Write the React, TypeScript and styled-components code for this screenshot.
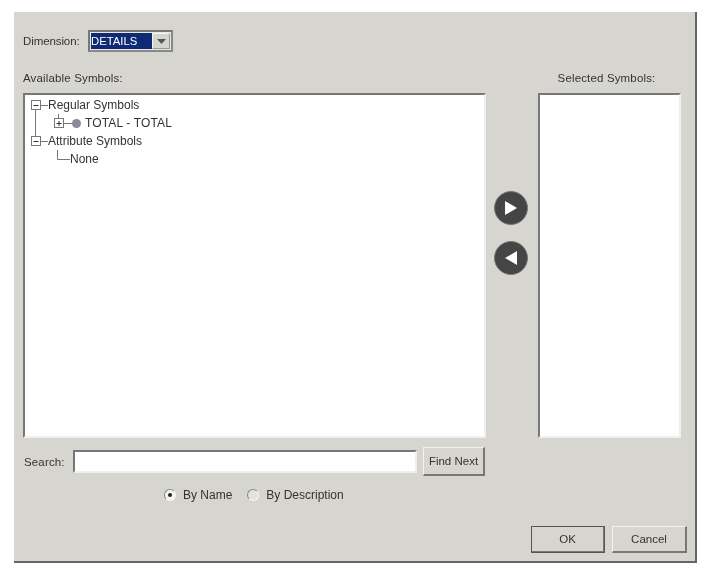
import styled, { createGlobalStyle } from 'styled-components'

// ─── Layout constants ────────────────────────────────────────────────────────
const ROW_HEIGHT = 18
const LINE = '#777'

const GlobalStyle = createGlobalStyle`
  html, body { margin: 0; padding: 0; background: #fff; }
  body { width: 718px; height: 578px; overflow: hidden; }
`

// ─── Tree drawings ───────────────────────────────────────────────────────────
const Expander = ({ x, open }: { x: number; open: boolean }) => (
  <g>
    <rect x={x + 0.5} y={4.5} width={9} height={9} fill="#fff" stroke={LINE} />
    <path d={`M${x + 2.5} 9.5H${x + 7.5}`} stroke="#333" />
    {!open && <path d={`M${x + 5} 7V12`} stroke="#333" />}
  </g>
)

const RegularGlyph = () => (
  <Glyph width={22} height={ROW_HEIGHT}>
    <Expander x={5} open />
    <path d="M15 9.5H22M9.5 14V18" stroke={LINE} fill="none" />
  </Glyph>
)

const TotalGlyph = () => (
  <Glyph width={59} height={ROW_HEIGHT}>
    <path d="M9.5 0V18M32.5 0V4M38 9.5H46" stroke={LINE} fill="none" />
    <Expander x={28} open={false} />
    <circle cx={50.5} cy={9.5} r={4.5} fill="#8b8b97" />
  </Glyph>
)

const AttributeGlyph = () => (
  <Glyph width={22} height={ROW_HEIGHT}>
    <path d="M9.5 0V4M15 9.5H22" stroke={LINE} fill="none" />
    <Expander x={5} open />
  </Glyph>
)

const NoneGlyph = () => (
  <Glyph width={44} height={ROW_HEIGHT}>
    <path d="M31.5 0V9.5H44" stroke={LINE} fill="none" />
  </Glyph>
)

// ─── Component ───────────────────────────────────────────────────────────────
const App = () => (
  <>
    <GlobalStyle />
    <Dialog>
      <DimensionRow>
        <DimensionLabel>Dimension:</DimensionLabel>
        <Combo>
          <ComboValue>DETAILS</ComboValue>
          <ComboButton>
            <svg width="9" height="5" viewBox="0 0 9 5">
              <path d="M0 0H9L4.5 5Z" fill="#555" />
            </svg>
          </ComboButton>
        </Combo>
      </DimensionRow>

      <Lists>
        <Label>Available Symbols:</Label>
        <span />
        <SelectedLabel>Selected Symbols:</SelectedLabel>
        <ListBox>
          <TreeRow><RegularGlyph />Regular Symbols</TreeRow>
          <TreeRow $caps><TotalGlyph />TOTAL - TOTAL</TreeRow>
          <TreeRow><AttributeGlyph />Attribute Symbols</TreeRow>
          <TreeRow><NoneGlyph />None</TreeRow>
        </ListBox>
        <MoveColumn>
          <MoveButton>
            <svg width="14" height="16" viewBox="0 0 14 16">
              <path d="M1 1L13 8L1 15Z" fill="#fff" />
            </svg>
          </MoveButton>
          <MoveButton>
            <svg width="14" height="16" viewBox="0 0 14 16">
              <path d="M13 1L1 8L13 15Z" fill="#fff" />
            </svg>
          </MoveButton>
        </MoveColumn>
        <ListBox />
      </Lists>

      <SearchRow>
        <SearchLabel>Search:</SearchLabel>
        <SearchInput readOnly />
        <FindButton>Find Next</FindButton>
      </SearchRow>

      <RadioRow>
        <RadioOption><Radio $checked />By Name</RadioOption>
        <RadioOption><Radio />By Description</RadioOption>
      </RadioRow>

      <Footer>
        <DialogButton $default>OK</DialogButton>
        <DialogButton>Cancel</DialogButton>
      </Footer>
    </Dialog>
  </>
)

// ─── Styles ──────────────────────────────────────────────────────────────────
const Dialog = styled.div`
  box-sizing: border-box;
  display: flex;
  flex-direction: column;
  width: 683px;
  height: 551px;
  margin: 12px 0 0 14px;
  padding: 18px 8px 8px 9px;
  background: #d6d5cf;
  border-right: 2px solid #666;
  border-bottom: 2px solid #666;
  font-family: 'Liberation Sans', Arial, sans-serif;
  font-size: 11.5px;
  color: #333;
  filter: blur(0.6px);
`

const Label = styled.span`
  line-height: 14px;
  letter-spacing: 0.15px;
  white-space: nowrap;
`

const DimensionLabel = styled(Label)`
  width: 65px;
  letter-spacing: -0.1px;
`

const SearchLabel = styled(Label)`
  width: 49px;
`

const DimensionRow = styled.div`
  display: flex;
  align-items: center;
  height: 22px;
`

const Combo = styled.div`
  box-sizing: border-box;
  display: flex;
  align-items: center;
  width: 85px;
  height: 22px;
  padding: 1px;
  background: #e8e8e4;
  border: 2px solid #777;
  border-right-color: #888;
  border-bottom-color: #888;
`

const ComboValue = styled.div`
  flex: 1;
  height: 100%;
  background: #0e2a74;
  color: #fff;
  font-size: 11.3px;
  line-height: 16px;
`

const ComboButton = styled.div`
  box-sizing: border-box;
  display: flex;
  align-items: center;
  justify-content: center;
  width: 18px;
  height: 100%;
  background: #d6d5cf;
  border: 1px solid #f4f4f0;
  border-right-color: #999;
  border-bottom-color: #999;
`

const Lists = styled.div`
  display: grid;
  grid-template-columns: 463px 52px 143px;
  grid-template-rows: 14px 345px;
  row-gap: 8px;
  margin-top: 19px;
`

const SelectedLabel = styled(Label)`
  padding-right: 6px;
  text-align: center;
`

const ListBox = styled.div`
  box-sizing: border-box;
  padding: 1px 0 0 1px;
  background: #fff;
  border: 2px solid #777;
  border-right: 2px solid #efefeb;
  border-bottom: 2px solid #efefeb;
`

const TreeRow = styled.div<{ $caps?: boolean }>`
  display: flex;
  align-items: center;
  height: ${ROW_HEIGHT}px;
  font-size: 12px;
  letter-spacing: ${({ $caps }) => ($caps ? 0.15 : 0)}px;
  white-space: nowrap;
`

const Glyph = styled.svg`
  display: block;
  flex-shrink: 0;
`

const MoveColumn = styled.div`
  display: flex;
  flex-direction: column;
  align-items: center;
  gap: 16px;
  padding: 98px 2px 0 0;
`

const MoveButton = styled.div`
  box-sizing: border-box;
  display: flex;
  align-items: center;
  justify-content: center;
  width: 34px;
  height: 34px;
  background: #454545;
  border: 1px solid #777;
  border-radius: 50%;
`

const SearchRow = styled.div`
  display: flex;
  align-items: center;
  width: 463px;
  height: 29px;
  margin-top: 9px;
  padding-left: 1px;
  box-sizing: border-box;
`

const SearchInput = styled.input`
  box-sizing: border-box;
  width: 344px;
  height: 23px;
  margin: 0 6px 0 0;
  padding: 0;
  background: #fff;
  border: 2px solid #777;
  border-right-color: #efefeb;
  border-bottom-color: #efefeb;
  outline: none;
`

const RaisedButton = styled.div`
  box-sizing: border-box;
  display: flex;
  align-items: center;
  justify-content: center;
  background: #d6d5cf;
  border: 1px solid #f2f2ee;
  border-right: 2px solid #777;
  border-bottom: 2px solid #777;
  white-space: nowrap;
`

const FindButton = styled(RaisedButton)`
  width: 62px;
  height: 29px;
`

const RadioRow = styled.div`
  display: flex;
  gap: 15px;
  height: 16px;
  margin-top: 11px;
  padding-left: 141px;
  font-size: 12px;
`

const RadioOption = styled.div`
  display: flex;
  align-items: center;
  gap: 7px;
  white-space: nowrap;
`

const Radio = styled.span<{ $checked?: boolean }>`
  box-sizing: border-box;
  display: flex;
  align-items: center;
  justify-content: center;
  width: 12px;
  height: 12px;
  background: ${({ $checked }) => ($checked ? '#f4f4f0' : '#e2e2de')};
  border: 1px solid #888;
  border-right-color: #f6f6f2;
  border-bottom-color: #f6f6f2;
  border-radius: 50%;

  &::after {
    content: '';
    display: ${({ $checked }) => ($checked ? 'block' : 'none')};
    width: 4px;
    height: 4px;
    background: #222;
    border-radius: 50%;
  }
`

const Footer = styled.div`
  display: flex;
  justify-content: flex-end;
  gap: 7px;
  margin-top: auto;
`

const DialogButton = styled(RaisedButton)<{ $default?: boolean }>`
  width: ${({ $default }) => ($default ? 74 : 75)}px;
  height: 27px;
  ${({ $default }) => $default && 'outline: 1px solid #555; outline-offset: -1px;'}
`

export default App
